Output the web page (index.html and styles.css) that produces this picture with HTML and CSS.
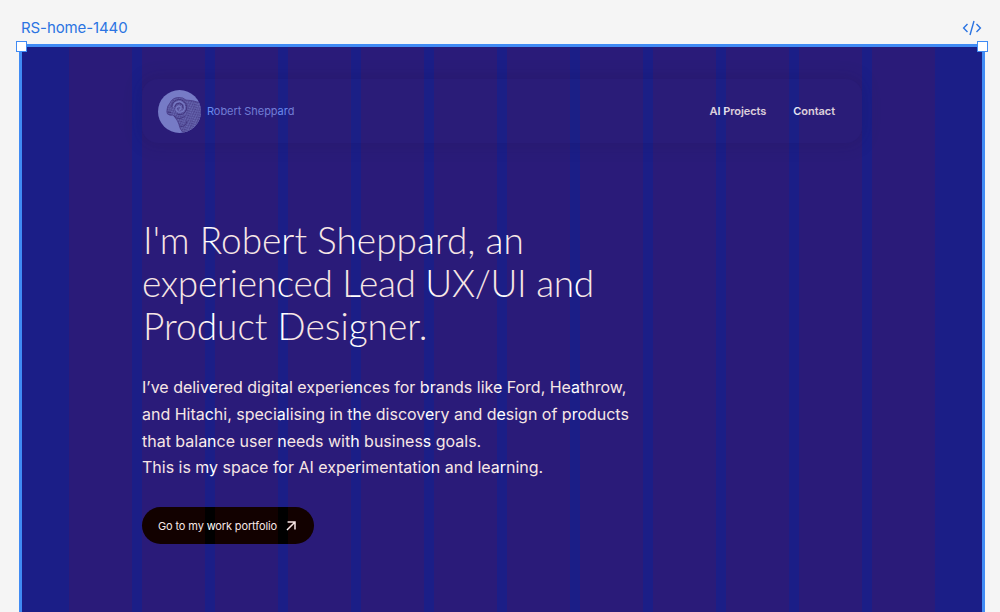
FILE: index.html
```html
<!DOCTYPE html>
<html lang="en">
<head>
<meta charset="utf-8">
<title>RS-home-1440</title>
<link rel="stylesheet" href="styles.css">
</head>
<body>
<div class="canvas">
  <div class="labels">
    <span class="frame-name">RS-home-1440</span>
    <svg class="code" width="20" height="16" viewBox="0 0 20 16"><path d="M5.5 4 1.6 8l3.9 4M14.5 4l3.9 4-3.9 4M12 1 8 15"/></svg>
  </div>
  <main class="frame">
    <header class="nav">
      <div class="brand">
        <svg class="avatar" width="43" height="43" viewBox="0 0 43 43">
          <defs>
            <clipPath id="disc"><circle cx="21.5" cy="21.5" r="21.5"/></clipPath>
            <pattern id="wool" width="2.6" height="2.2" patternUnits="userSpaceOnUse" patternTransform="rotate(33)"><path d="M0 .7q.7-.9 1.3 0t1.3 0M.3 1.8h.9" fill="none" stroke="#2b2d85" stroke-width=".65"/></pattern>
          </defs>
          <circle cx="21.5" cy="21.5" r="21.5" fill="#7088dd"/>
          <g clip-path="url(#disc)">
            <path d="M9 20Q9 16 12 13Q14 8 20 7.5Q25 7 28 10Q34 10 43 13V43H27Q24 43 22 38Q21 34 19.500 31Q17 27 15 25Q12 26 9.500 24Q8.500 22 9 20Z" fill="#6376c9"/>
            <path d="M9 20Q9 16 12 13Q14 8 20 7.5Q25 7 28 10Q34 10 43 13V43H27Q24 43 22 38Q21 34 19.500 31Q17 27 15 25Q12 26 9.500 24Q8.500 22 9 20Z" fill="url(#wool)" stroke="#383b91" stroke-width=".7"/>
            <path d="M15.500 17Q16 11.500 22 11.500Q27.500 13 26.500 19Q24.500 23 20.500 22Q17 20.500 18.500 17.500Q20.500 15 23 17Q23.500 20 21 20" fill="none" stroke="#7186d8" stroke-width="1.300"/>
            <path d="M13.500 17Q15 9 22.500 9.500Q30 12 28.500 20Q25.500 25.500 19.500 24.500M16.500 17Q17.500 13 22 13Q26 15 25 18.500M9.500 22l3.500.5M16 26q5 5 11 0M22 36q5 2 7-5" fill="none" stroke="#303387" stroke-width=".8"/>
          </g>
        </svg>
        <span class="brand-name">Robert Sheppard</span>
      </div>
      <nav class="links"><span>AI Projects</span><span>Contact</span></nav>
    </header>
    <section class="hero">
      <h1 class="title">I'm Robert Sheppard, an<br><span class="title-wide">experienced Lead UX/UI and</span><br>Product Designer.</h1>
      <p class="intro">I’ve delivered digital experiences for brands like Ford, Heathrow,<br>and Hitachi, specialising in the discovery and design of products<br>that balance user needs with business goals.<br>This is my space for AI experimentation and learning.</p>
      <a class="button"><span>Go to my work portfolio</span><svg width="10" height="10" viewBox="0 0 10 10"><path d="M1 9 8.8 1.2M1.600 1h7.400v7.600"/></svg></a>
    </section>
    <div class="grid"><i></i><i></i><i></i><i></i><i></i><i></i><i></i><i></i><i></i><i></i><i></i><i></i></div>
    <div class="selection"><b class="handle left"></b><b class="handle right"></b></div>
  </main>
</div>
</body>
</html>
```
FILE: styles.css
```css
* { box-sizing: border-box; }
body { margin: 0; }
.canvas { width: 1000px; height: 612px; overflow: hidden; background: #f5f5f5; font-family: Inter, sans-serif; }
.labels { height: 46px; padding: 10px 18px 0 21px; display: flex; justify-content: space-between; align-items: center; }
.frame-name { color: #2b74e2; font-size: 15px; line-height: 18px; letter-spacing: -.1px; }
.code { fill: none; stroke: #2b74e2; stroke-width: 1.4; }
.frame { position: relative; height: 640px; margin: 0 16px 0 20px; padding: 33px 122px 0; background: #1b1e87; }
.nav { height: 64px; padding: 0 27px 0 16px; display: flex; align-items: center; justify-content: space-between; border-radius: 16px; background: #1b1f86; box-shadow: 0 0 16px 2px rgba(20, 20, 90, .25); }
.brand { display: flex; align-items: center; gap: 6px; }
.brand-name { color: #6a8aec; font-size: 11px; letter-spacing: -.05px; }
.links { display: flex; gap: 27px; color: #e2e6f4; font-size: 11px; font-weight: 600; letter-spacing: -.06px; }
.hero { padding-top: 75px; color: #fff; }
.title { margin: 0; padding-left: 1px; font: 300 37px/43px Lato, sans-serif; white-space: nowrap; }
.title-wide { margin-left: -1px; letter-spacing: -.3px; }
.intro { margin: 27px 0 0; font-size: 16px; line-height: 26.8px; white-space: nowrap; letter-spacing: -.01px; }
.button { width: 172px; height: 37px; margin-top: 26px; padding: 0 16px; display: flex; align-items: center; gap: 9px; border-radius: 19px; background: #000; font-size: 11px; letter-spacing: -.13px; white-space: nowrap; }
.button svg { fill: none; stroke: #fff; stroke-width: 1.5; }
.grid { position: absolute; inset: 0 49.3px 0 49.4px; display: grid; grid-template-columns: repeat(12, 1fr); column-gap: 10.6px; }
.grid i { background: rgba(180, 8, 0, .1); }
.selection { position: absolute; inset: -2px -1px 0; border: 3px solid #408bf4; border-bottom: 0; }
.handle { position: absolute; top: -6px; width: 11px; height: 11px; border: 1.5px solid #408bf4; background: #fff; }
.left { left: -6px; }
.right { right: -6px; }
```
